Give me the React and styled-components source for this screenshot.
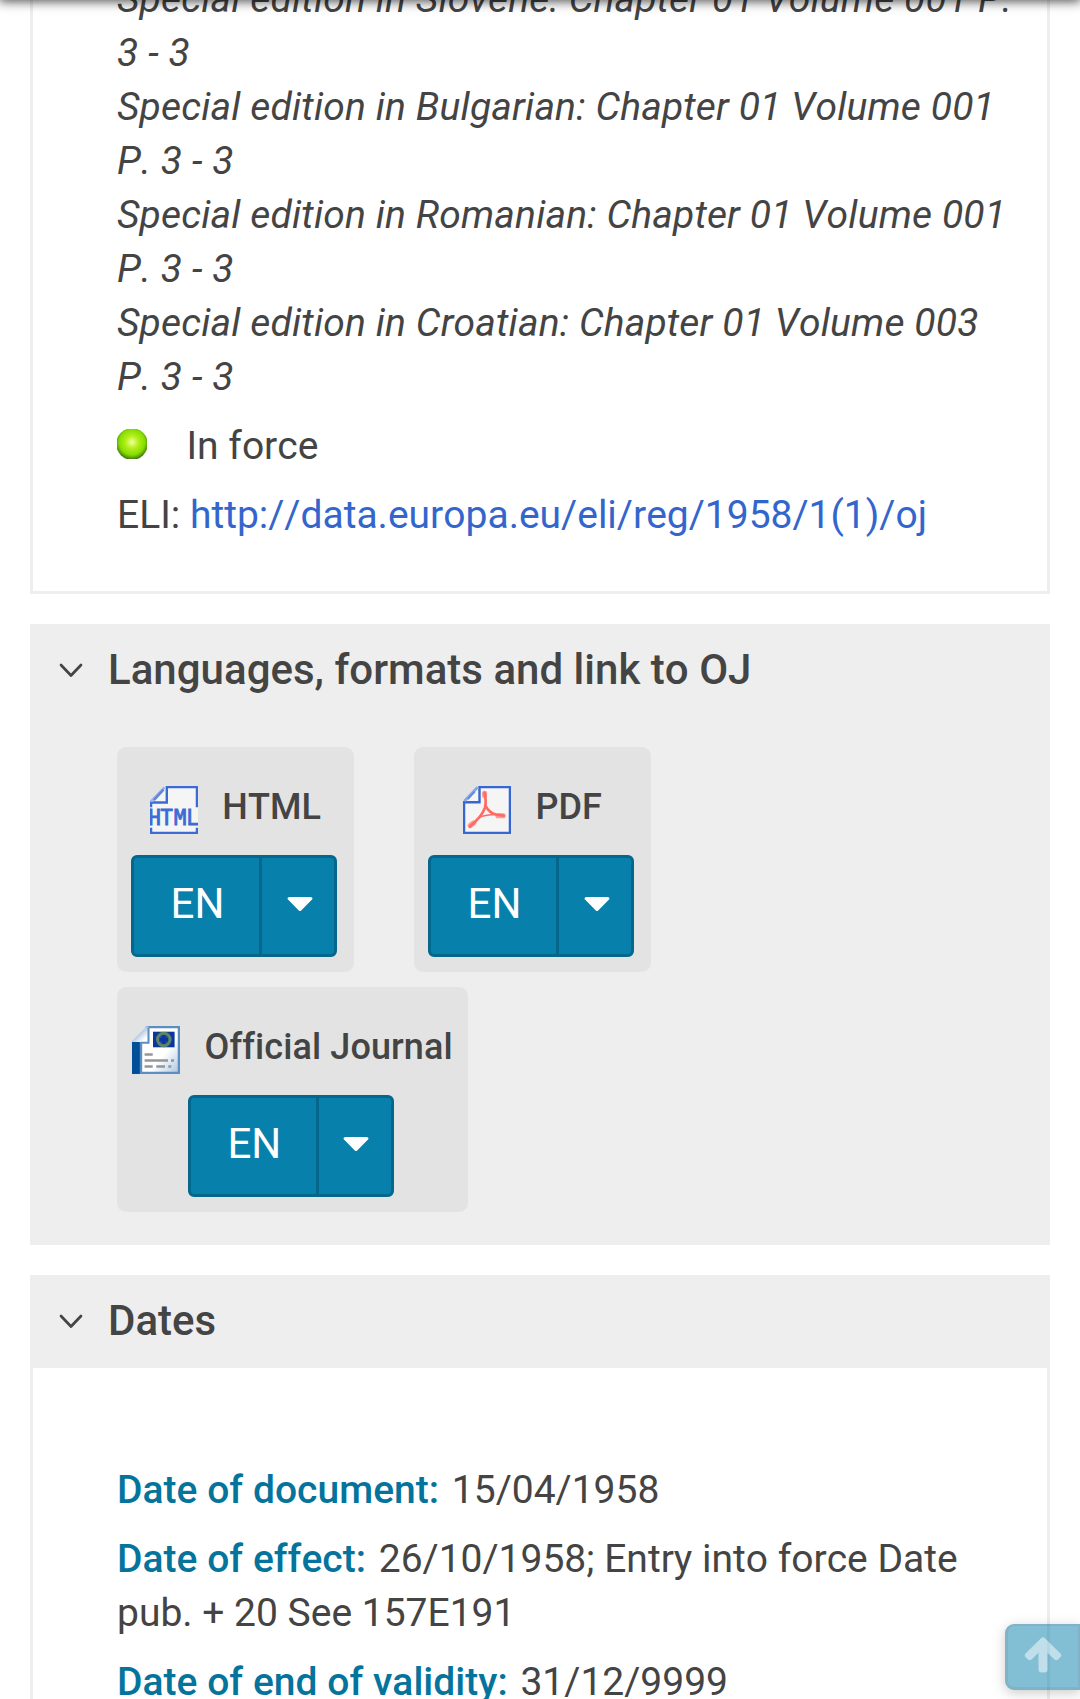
import React from "react";
import styled, { createGlobalStyle } from "styled-components";

const GlobalStyle = createGlobalStyle`
  *, *::before, *::after { box-sizing: border-box; }
  body { margin: 0; background: #fff; }
`;

const Viewport = styled.div`
  position: relative;
  height: 1699px;
  overflow: hidden;
  font-family: Roboto, "Liberation Sans", sans-serif;
  font-size: 39px;
  font-kerning: none;
  font-variant-ligatures: none;
  line-height: 54px;
  color: #444;
`;

const TopShadow = styled.div`
  position: absolute;
  top: -12px;
  left: 0;
  right: 0;
  height: 12px;
  background: #555;
  box-shadow: 0 0 12px 1px rgba(0, 0, 0, 0.75);
`;

const Sections = styled.main`
  display: flex;
  flex-direction: column;
  gap: 30px;
  margin-top: -28px;
  padding: 0 30px;
`;

const Panel = styled.section`
  border: 3px solid #eee;
  border-top: 0;
  background: ${(p) => (p.$filled ? "#eee" : "#fff")};
`;

const PanelHead = styled.header`
  display: flex;
  align-items: center;
  gap: 25.5px;
  height: 93px;
  padding: 0 25.5px 2px;
  background: #eee;

  svg {
    margin-top: 2px;
  }
`;

const PanelTitle = styled.h2`
  margin: 0;
  font-size: 42px;
  font-weight: 500;
  line-height: 48px;
  letter-spacing: 0.02px;
`;

const PanelBody = styled.div`
  display: flex;
  flex-direction: column;
  gap: 15px;
  padding: ${(p) => p.$top}px 30px 49px 84px;
`;

const Line = styled.p`
  margin: 0;
`;

const Edition = styled.em`
  display: block;
  white-space: pre-line;
  letter-spacing: 0.15px;
`;

const Status = styled.p`
  display: flex;
  align-items: flex-start;
  gap: 39.5px;
  margin: 0;
`;

const StatusDot = styled.svg`
  width: 30px;
  height: 30px;
  margin-top: 10px;
`;

const Link = styled.a`
  color: #3366cc;
  text-decoration: none;
`;

const Label = styled.strong`
  font-weight: 500;
  color: #04749c;
  letter-spacing: 0.03px;
  margin-right: 3px;
`;

const Formats = styled.div`
  display: flex;
  flex-wrap: wrap;
  gap: 15px 60px;
  padding: 30px 84px;
`;

const Card = styled.div`
  display: flex;
  flex-direction: column;
  align-items: center;
  gap: 21px;
  padding: 39px 15px 15px;
  border-radius: 9px;
  background: #e3e3e3;
`;

const CardLabel = styled.div`
  display: flex;
  gap: 24.5px;
  height: 48px;
  font-size: 36px;
  font-weight: 500;
  line-height: 42px;
  letter-spacing: 0.1px;
`;

const FormatIcon = styled.svg`
  width: 48px;
  height: 48px;
  flex: none;
`;

const SplitButton = styled.div`
  display: flex;
  width: 206px;
  height: 102px;
  margin: 0 2px 0 -1px;
  border: 3px solid #05678c;
  border-radius: 6px;
  background: #0780ac;
  color: #fff;
`;

const LangButton = styled.button`
  width: 128px;
  padding: 0 0 4px 2px;
  border: 0;
  border-right: 3px solid #05678c;
  background: none;
  color: inherit;
  font: 400 42px/60px Roboto, "Liberation Sans", sans-serif;
`;

const MenuButton = styled.button`
  display: flex;
  flex: 1;
  align-items: center;
  justify-content: center;
  padding: 0 0 3px 3px;
  border: 0;
  background: none;
  color: inherit;
`;

const BackToTop = styled.button`
  position: absolute;
  top: 1624px;
  right: 0;
  display: flex;
  align-items: flex-start;
  justify-content: flex-start;
  width: 75px;
  height: 66px;
  padding: 10px 0 0 16px;
  border: 3px solid #05678c;
  border-width: 2px 2px 3px 3px;
  border-radius: 9px 0 0 9px;
  background: #0780ac;
  box-shadow: 0 3px 12px rgba(0, 0, 0, 0.4);
  opacity: 0.5;
`;

const Chevron = () => (
  <svg width="24" height="16" viewBox="0 0 24 16" fill="none" stroke="#444" strokeWidth="2.7" strokeLinecap="round" strokeLinejoin="round">
    <path d="M2 2 12 12.5 22 2" />
  </svg>
);

const Caret = () => (
  <svg width="26" height="15" viewBox="0 0 26 15" fill="#fff">
    <path d="M2 0h22q2.400 1 1 2.600L14.200 13.400q-1.200 1.200-2.400 0L1 2.600Q-.4 1 2 0Z" />
  </svg>
);

const HtmlIcon = () => (
  <FormatIcon viewBox="0 0 16 16">
    <path d="M4.500 0H16v16H0V5Z" fill="#f5f5f5" />
    <path d="M.35 7.100V5.500H5.600V.35h10.050V7.100M.35 13.900v1.750h15.300V13.900" fill="none" stroke="#3b6bd3" strokeWidth=".8" />
    <path d="M.3 5.200 4.900.4" stroke="#9db5e6" strokeWidth=".9" />
    <path d="M1.300 4.700 4.500 1.200" stroke="#5e87da" strokeWidth=".8" />
    <text x="-.5 3.500 8 12.200" y="13" fontFamily="'DejaVu Sans Mono', monospace" fontSize="6.800" fill="#3b6bd3" stroke="#3b6bd3" strokeWidth=".3" letterSpacing="0">HTML</text>
  </FormatIcon>
);

const PdfIcon = () => (
  <FormatIcon viewBox="0 0 16 16">
    <path d="M4.800.3h10.900v15.400H.3V5.200Z" fill="#f5f5f5" />
    <path d="M5.500.35h10.150v15.300H.35V5.400H5.500Z" fill="none" stroke="#3566d2" strokeWidth=".8" />
    <path d="M.5 5 4.900.4" stroke="#86a5e5" strokeWidth=".9" />
    <path d="M1.600 4.400 3.900 1.900" stroke="#5e87da" strokeWidth=".6" />
    <g fill="none" stroke="#ff6a62" strokeLinecap="round">
      <path d="M7.200 2.300c.4 1.800.5 3.500.1 5-.8 2.300-2.700 4.300-5 6.200" strokeWidth=".9" />
      <path d="M7.500 6.600c.8 1.500 1.900 2.500 3.500 2.900l2.500.4" strokeWidth=".9" />
      <path d="M5.500 10.400c1.800-.7 3.500-.9 5.500-.9" strokeWidth=".5" />
      <path d="m2.400 13.200 1.200-.9M11.600 9.900h1.800M7.200 2.400v.8" strokeWidth="1.700" opacity=".65" />
    </g>
  </FormatIcon>
);

const JournalIcon = () => (
  <FormatIcon viewBox="0 0 16 16">
    <defs>
      <linearGradient id="journalPage" x1="0" y1="0" x2="1" y2="1">
        <stop offset=".6" stopColor="#fff" />
        <stop offset="1" stopColor="#a9c6e2" />
      </linearGradient>
      <linearGradient id="journalFold" x1="0" y1="0" x2="1" y2="1">
        <stop offset=".3" stopColor="#8fb2d5" />
        <stop offset=".8" stopColor="#fff" />
      </linearGradient>
    </defs>
    <path d="M0 5h3v11H0Z" fill="#004f98" />
    <path d="M5 .35h10.650v15.300H3V5Z" fill="url(#journalPage)" stroke="#5c8fc0" strokeWidth=".8" />
    <path d="M0 5 5 0l.6.300v5H0Z" fill="url(#journalFold)" />
    <path d="M5.500.5v5.100H3" fill="none" stroke="#5c8fc0" strokeWidth=".7" />
    <rect x="7" y="1.900" width="7.200" height="5.200" fill="#0a369f" />
    <circle cx="10.600" cy="4.500" r="2.100" fill="#24538c" stroke="#5f8468" strokeWidth="1" />
    <path d="M10.600 3.100v2.800M9.200 4.500h2.800" stroke="#0a369f" strokeWidth="1.200" />
    <path d="M4.200 9.500h2.700M4.200 11.500h7.800M13 11.500h1M4.200 13.500h2.700M8.100 13.500h2.900M12.100 13.500h1" stroke="#969696" strokeWidth=".85" />
  </FormatIcon>
);

const editions = [
  ["Slovene", "001 P.\n3 - 3"],
  ["Bulgarian", "001\nP. 3 - 3"],
  ["Romanian", "001\nP. 3 - 3"],
  ["Croatian", "003\nP. 3 - 3"],
];

const formats = [
  ["HTML", HtmlIcon],
  ["PDF", PdfIcon],
  ["Official Journal", JournalIcon],
];

const dates = [
  ["Date of document:", "15/04/1958"],
  ["Date of effect:", "26/10/1958; Entry into force Date pub. + 20 See 157E191"],
  ["Date of end of validity:", "31/12/9999"],
];

function Head({ children }) {
  return (
    <PanelHead>
      <Chevron />
      <PanelTitle>{children}</PanelTitle>
    </PanelHead>
  );
}

export default function App() {
  return (
    <Viewport>
      <GlobalStyle />
      <Sections>
        <Panel>
          <PanelBody $top={0}>
            <div>
              {editions.map(([lang, rest]) => (
                <Edition key={lang}>{`Special edition in ${lang}: Chapter 01 Volume ${rest}`}</Edition>
              ))}
            </div>
            <Status>
              <StatusDot viewBox="0 0 30 30">
                <defs>
                  <radialGradient id="statusGlow" cx=".5" cy=".44" r=".56">
                    <stop offset="0" stopColor="#f4ff9c" />
                    <stop offset=".35" stopColor="#b4f01c" />
                    <stop offset=".72" stopColor="#85dd00" />
                    <stop offset="1" stopColor="#3d700c" />
                  </radialGradient>
                </defs>
                <circle cx="15" cy="15" r="15.800" fill="url(#statusGlow)" />
              </StatusDot>
              In force
            </Status>
            <Line>
              ELI: <Link href="#eli">http://data.europa.eu/eli/reg/1958/1(1)/oj</Link>
            </Line>
          </PanelBody>
        </Panel>
        <Panel $filled>
          <Head>Languages, formats and link to OJ</Head>
          <Formats>
            {formats.map(([name, Icon]) => (
              <Card key={name}>
                <CardLabel>
                  <Icon />
                  <span>{name}</span>
                </CardLabel>
                <SplitButton>
                  <LangButton>EN</LangButton>
                  <MenuButton aria-label="More languages">
                    <Caret />
                  </MenuButton>
                </SplitButton>
              </Card>
            ))}
          </Formats>
        </Panel>
        <Panel>
          <Head>Dates</Head>
          <PanelBody $top={95}>
            {dates.map(([label, value]) => (
              <Line key={label}>
                <Label>{label}</Label> {value}
              </Line>
            ))}
          </PanelBody>
        </Panel>
      </Sections>
      <TopShadow />
      <BackToTop aria-label="Back to top">
        <svg width="38" height="38" viewBox="0 0 38 38" fill="rgba(255,255,255,.5)">
          <path d="M17.300 2q1.700-1.500 3.400 0L36.500 17.600q1.600 1.800 0 3.500l-2.400 2.400q-1.800 1.500-3.600 0L23.500 16.800V33.500q0 3-3 3h-3q-3 0-3-3V16.800L7.500 23.500q-1.800 1.500-3.600 0L1.500 21.100q-1.600-1.700 0-3.500Z" />
        </svg>
      </BackToTop>
    </Viewport>
  );
}
